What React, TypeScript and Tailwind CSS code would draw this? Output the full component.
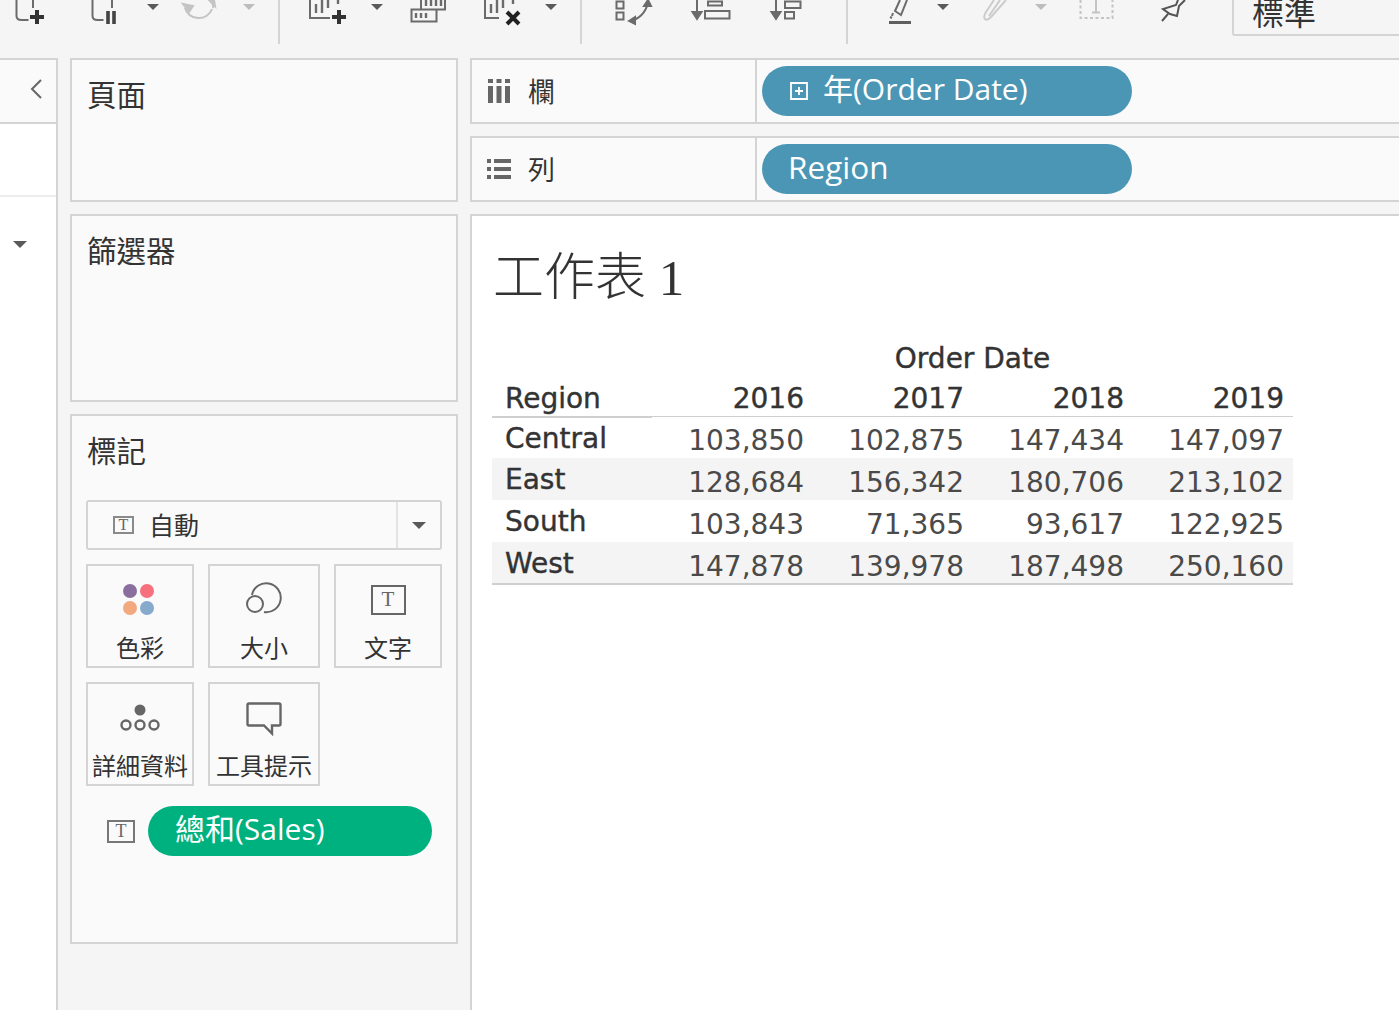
/**
 * Tableau worksheet view: toolbar, marks card, shelves and a text table.
 */

const FONT = "font-['Open_Sans','Noto_Sans_CJK_TC',sans-serif]";

const rows = [
  { region: "Central", values: ["103,850", "102,875", "147,434", "147,097"], shaded: false },
  { region: "East", values: ["128,684", "156,342", "180,706", "213,102"], shaded: true },
  { region: "South", values: ["103,843", "71,365", "93,617", "122,925"], shaded: false },
  { region: "West", values: ["147,878", "139,978", "187,498", "250,160"], shaded: true },
];

const years = ["2016", "2017", "2018", "2019"];

function Caret({ x, light = false }: { x: number; light?: boolean }) {
  return <path d={`M${x - 6} 4h12l-6 6z`} fill={light ? "#bdbdbd" : "#5a5a5a"} stroke="none" />;
}

function Toolbar() {
  return (
    <div className="flex h-[58px] shrink-0 items-start overflow-hidden">
      <svg viewBox="0 0 278 58" className="h-[58px] w-[278px] shrink-0" fill="none" stroke="#6b6b6b" strokeWidth="2">
        <path d="M16.500 0v16q0 4 5 4h7M33 0v8" />
        <path d="M37 10v14M30 17h14" stroke="#333" strokeWidth="4" />
        <path d="M92.500 0v16q0 4 5 4h6M112 0v8" />
        <path d="M108 11v13M114 11v13" stroke="#444" strokeWidth="3.600" />
        <Caret x={153} />
        <g stroke="#c4c4c4" strokeWidth="2">
          <path d="M185 8a14 13 0 0 0 27 1M213 8q1-4-3-8" />
          <path d="M183 4l6 8 4-6z" fill="#c4c4c4" />
          <path d="M209 0l6 6-1-6z" fill="#c4c4c4" />
        </g>
        <Caret x={249} light />
      </svg>
      <div className="h-[44px] w-[2px] shrink-0 bg-[#d4d4d4]" />
      <svg viewBox="280 0 300 58" className="h-[58px] w-[300px] shrink-0" fill="none" stroke="#6b6b6b" strokeWidth="2">
        <path d="M310 0v18h20" />
        <path d="M316 4v9M322 0v13M328 0v8M338 0v4" strokeWidth="2.400" />
        <path d="M339 10v14M332 17h14" stroke="#333" strokeWidth="4" />
        <Caret x={377} />
        <path d="M411.500 9.500h25v12h-25zM421 9.500h24V0M421 0v9" />
        <path d="M416 13v5M421 13v5M426 13v5M426 0v6M431 0v6M436 0v6M441 0v6" strokeWidth="2.400" />
        <path d="M485 0v18h14" />
        <path d="M491 4v9M497 0v13M503 0v8M513 0v4" strokeWidth="2.400" />
        <path d="M507 12l12 12M519 12l-12 12" stroke="#222" strokeWidth="4" />
        <Caret x={551} />
      </svg>
      <div className="h-[44px] w-[2px] shrink-0 bg-[#d4d4d4]" />
      <svg viewBox="582 0 264 58" className="h-[58px] w-[264px] shrink-0" fill="none" stroke="#6b6b6b" strokeWidth="2">
        <path d="M616.500 1.500h7v7h-7zM616.500 12.500h7v7h-7z" />
        <path d="M630 21q14-3 18-18" />
        <path d="M644 6l4-6 3 6zM629 21l6-4v7z" fill="#6b6b6b" />
        <path d="M697 0v14" />
        <path d="M692.500 12h9l-4.500 7z" fill="#6b6b6b" />
        <path d="M708 1.500h14v4h-14zM705 11h24.500v7.500h-24.500z" />
        <path d="M776 0v14" />
        <path d="M771.500 12h9l-4.500 7z" fill="#6b6b6b" />
        <path d="M785 1.500h15.500v6.500h-15.500zM785 12h9v6.500h-9z" />
      </svg>
      <div className="h-[44px] w-[2px] shrink-0 bg-[#d4d4d4]" />
      <svg viewBox="848 0 384 58" className="h-[58px] w-[384px] shrink-0" fill="none" stroke="#6b6b6b" strokeWidth="2">
        <path d="M900 0l-5 11 6 4 6-15M893 13l-1 3M890 17l2 1" />
        <path d="M889 22.500h22" stroke="#5f5f5f" strokeWidth="3" />
        <Caret x={943} />
        <path d="M1006 0l-15 17q-4 4-6 2t1-7l8-12M1000 0l-11 16" stroke="#cccccc" strokeWidth="2" />
        <Caret x={1041} light />
        <path d="M1080.500 0v18h32V0" stroke="#c4c4c4" strokeDasharray="3 2.500" />
        <path d="M1096 0v12M1092 12.500h8" stroke="#c4c4c4" />
        <path d="M1178 0l-2 5-13 4 7 5 7 2 2-10 6-6M1168 14l-6 7" stroke="#555" />
      </svg>
      <div className="flex h-[36px] min-w-0 flex-1 items-end overflow-hidden rounded-bl-[3px] border-b-2 border-l-2 border-[#d4d4d4] pl-[18px]">
        <span className="pb-[2px] text-[32px] leading-[38px] text-[#333]">標準</span>
      </div>
    </div>
  );
}

function Sidebar() {
  return (
    <aside className="flex w-[58px] shrink-0 flex-col border-r-2 border-t-2 border-[#d4d4d4]">
      <div className="flex h-[64px] items-center justify-end border-b-2 border-[#d4d4d4] bg-[#fafafa] pb-[4px] pr-[14px]">
        <svg viewBox="0 0 12 20" className="h-[20px] w-[12px]" fill="none" stroke="#666" strokeWidth="2">
          <path d="M11 1L2 10l9 9" />
        </svg>
      </div>
      <div className="h-[71px] bg-white" />
      <div className="flex-1 border-t-2 border-[#ececec] bg-white pl-[13px] pt-[44px]">
        <svg viewBox="0 0 14 7" className="block h-[7px] w-[14px]">
          <path d="M0 0h14L7 7z" fill="#5a5a5a" />
        </svg>
      </div>
    </aside>
  );
}

function MarkIcon({ name }: { name: string }) {
  if (name === "色彩") {
    return (
      <svg viewBox="0 0 32 32" className="-ml-[2px] -mt-[2px] h-[32px] w-[32px]">
        <circle cx="7" cy="7" r="7" fill="#8a6f9e" />
        <circle cx="24" cy="7" r="7" fill="#f6707e" />
        <circle cx="7" cy="24" r="7" fill="#f2a97e" />
        <circle cx="24" cy="24" r="7" fill="#86a9cc" />
      </svg>
    );
  }
  if (name === "大小") {
    return (
      <svg viewBox="0 0 38 36" className="-mt-[5px] h-[36px] w-[38px]" fill="#fafafa" stroke="#666" strokeWidth="2">
        <path d="M7 15a14.500 14.500 0 1 1 12 17" />
        <circle cx="10" cy="24" r="8" />
      </svg>
    );
  }
  if (name === "文字") {
    return <TextBox className="-mt-[2px] h-[30px] w-[35px] border-[2px] border-[#666]" letter="text-[21px]" />;
  }
  if (name === "詳細資料") {
    return (
      <svg viewBox="0 0 40 28" className="-mt-[1px] h-[28px] w-[40px]" fill="none" stroke="#666" strokeWidth="2.400">
        <circle cx="20" cy="6" r="5.500" fill="#666" stroke="none" />
        <circle cx="6" cy="21" r="4.500" />
        <circle cx="20" cy="21" r="4.500" />
        <circle cx="34" cy="21" r="4.500" />
      </svg>
    );
  }
  return (
    <svg viewBox="0 0 36 34" className="h-[34px] w-[36px]" fill="none" stroke="#666" strokeWidth="2.400">
      <path d="M3 1.500h30q1.500 0 1.500 1.500v19q0 1.500-1.500 1.500h-7v8l-8-8H3q-1.500 0-1.500-1.500V3q0-1.500 1.500-1.500z" />
    </svg>
  );
}

function TextBox({ className, letter }: { className: string; letter: string }) {
  return (
    <span className={`flex items-center justify-center font-['Liberation_Serif',serif] leading-none text-[#666] ${className}`}>
      <span className={letter}>T</span>
    </span>
  );
}

function MarkButton({ name, width }: { name: string; width: string }) {
  return (
    <div className={`flex h-[104px] flex-col items-center border-2 border-[#d4d4d4] ${width}`}>
      <div className="flex h-[67px] items-center justify-center pt-[2px]">
        <MarkIcon name={name} />
      </div>
      <span className="whitespace-nowrap text-[24px] leading-[30px] text-[#333]">{name}</span>
    </div>
  );
}

function Pill({ color, className, children }: { color: string; className: string; children: React.ReactNode }) {
  return (
    <div className={`flex h-[50px] items-center rounded-[25px] pb-[5px] text-[30px] leading-none text-white ${color} ${className}`}>
      {children}
    </div>
  );
}

function MarksCard() {
  return (
    <section className="h-[530px] border-2 border-[#d4d4d4] bg-[#fafafa] px-[15px] pt-[16px]">
      <h2 className="text-[29.500px] leading-[38px] text-[#333]">標記</h2>
      <div className="-mx-[1px] mt-[30px] flex h-[50px] items-center rounded-[3px] border-2 border-[#d4d4d4]">
        <div className="flex flex-1 items-center pl-[25px]">
          <TextBox className="h-[18px] w-[21px] border-2 border-[#8a8a8a]" letter="text-[16px]" />
          <span className="ml-[15px] text-[25px] leading-none text-[#333]">自動</span>
        </div>
        <div className="flex h-full w-[44px] items-center justify-center border-l-2 border-[#e4e4e4]">
          <svg viewBox="0 0 14 7" className="h-[7px] w-[14px]">
            <path d="M0 0h14L7 7z" fill="#5a5a5a" />
          </svg>
        </div>
      </div>
      <div className="-mx-[1px] mt-[14px] flex gap-[14px]">
        <MarkButton name="色彩" width="w-[108px]" />
        <MarkButton name="大小" width="w-[112px]" />
        <MarkButton name="文字" width="w-[108px]" />
      </div>
      <div className="-mx-[1px] mt-[14px] flex gap-[14px]">
        <MarkButton name="詳細資料" width="w-[108px]" />
        <MarkButton name="工具提示" width="w-[112px]" />
      </div>
      <div className="-mx-[1px] mt-[20px] flex items-center pl-[21px]">
        <TextBox className="h-[23px] w-[28px] border-2 border-[#777]" letter="text-[18px]" />
        <Pill color="bg-[#00b180]" className="ml-[13px] w-[284px] pl-[27px]">
          <span className="whitespace-nowrap">總和(Sales)</span>
        </Pill>
      </div>
    </section>
  );
}

function Shelf({ label, icon, children }: { label: string; icon: React.ReactNode; children: React.ReactNode }) {
  return (
    <div className="flex h-[66px] border-y-2 border-l-2 border-[#d4d4d4] bg-[#fafafa]">
      <div className="flex w-[285px] items-center border-r-2 border-[#d4d4d4] pl-[14px]">
        <div className="flex w-[26px] justify-center">{icon}</div>
        <span className="ml-[16px] text-[27px] leading-none text-[#333]">{label}</span>
      </div>
      <div className="flex flex-1 items-center pl-[5px]">{children}</div>
    </div>
  );
}

function DataTable() {
  const head = "text-[28px] font-['DejaVu_Sans',sans-serif] [-webkit-text-stroke:0.4px_#333]";
  return (
    <div className="ml-[20px] mt-[31px] w-[801px] font-['DejaVu_Sans',sans-serif] text-[#333]">
      <div className={`h-[36px] pl-[160px] text-center leading-[38px] ${head}`}>Order Date</div>
      <div className="grid h-[40px] grid-cols-[160px_repeat(4,160px)] items-end">
        <span className={`pl-[13px] leading-[34px] ${head}`}>Region</span>
        {years.map((y) => (
          <span key={y} className={`pr-[8px] text-right leading-[34px] ${head}`}>{y}</span>
        ))}
      </div>
      <div className="relative border-b border-t border-[#cfcfcf]">
        <div className="absolute -top-[1px] left-0 h-[2px] w-[160px] bg-[#cfcfcf]" />
        {rows.map((row) => (
          <div
            key={row.region}
            className={`grid grid-cols-[160px_repeat(4,160px)] items-center ${row.region === "Central" ? "h-[41px]" : "h-[42px]"} ${row.shaded ? "bg-[#f4f4f4]" : ""}`}
          >
            <span className={`pt-[2px] pl-[13px] leading-none ${head}`}>{row.region}</span>
            {row.values.map((v, i) => (
              <span key={i} className="pr-[8px] pt-[7px] text-right text-[28px] leading-none text-[#4a4a4a]">{v}</span>
            ))}
          </div>
        ))}
        <div className="absolute -bottom-[1px] left-0 h-[2px] w-full bg-[#cfcfcf]" />
      </div>
    </div>
  );
}

export default function App() {
  return (
    <div className={`flex h-[1010px] w-[1399px] flex-col overflow-hidden bg-[#f5f5f5] ${FONT}`}>
      <Toolbar />
      <div className="flex min-h-0 flex-1">
        <Sidebar />
        <div className="ml-[12px] flex w-[388px] shrink-0 flex-col gap-[12px]">
          <section className="h-[144px] border-2 border-[#d4d4d4] bg-[#fafafa] px-[15px] pt-[16px]">
            <h2 className="text-[29.500px] leading-[38px] text-[#333]">頁面</h2>
          </section>
          <section className="h-[188px] border-2 border-[#d4d4d4] bg-[#fafafa] px-[15px] pt-[16px]">
            <h2 className="text-[29.500px] leading-[38px] text-[#333]">篩選器</h2>
          </section>
          <MarksCard />
        </div>
        <div className="ml-[12px] flex min-w-0 flex-1 flex-col gap-[12px]">
          <Shelf
            label="欄"
            icon={
              <svg viewBox="0 0 22 24" className="h-[24px] w-[22px]" fill="#666">
                <path d="M0 0h5v4H0zM0 7h5v17H0zM8.500 0h5v4h-5zM8.500 7h5v17h-5zM17 0h5v4h-5zM17 7h5v17h-5z" />
              </svg>
            }
          >
            <Pill color="bg-[#4b96b4]" className="w-[370px] pl-[28px]">
              <svg viewBox="0 0 18 18" className="mt-[5px] h-[18px] w-[18px] shrink-0" fill="none" stroke="#fff" strokeWidth="1.800">
                <path d="M1 1h16v16H1zM9 5v8M5 9h8" />
              </svg>
              <span className="ml-[15px] whitespace-nowrap">年(Order Date)</span>
            </Pill>
          </Shelf>
          <Shelf
            label="列"
            icon={
              <svg viewBox="0 0 24 20" className="h-[20px] w-[24px]" fill="#666">
                <path d="M0 0h4v4H0zM7 0h17v4H7zM0 8h4v4H0zM7 8h17v4H7zM0 16h4v4H0zM7 16h17v4H7z" />
              </svg>
            }
          >
            <Pill color="bg-[#4b96b4]" className="w-[370px] pl-[26px]">
              <span className="text-[31.500px]">Region</span>
            </Pill>
          </Shelf>
          <main className="flex-1 border-l-2 border-t-2 border-[#d4d4d4] bg-white">
            <h1 className="ml-[21px] mt-[31px] h-[62px] font-['Liberation_Serif','Noto_Sans_CJK_TC',serif] text-[51px] font-light leading-[62px] text-[#333]">工作表 1</h1>
            <DataTable />
          </main>
        </div>
      </div>
    </div>
  );
}
